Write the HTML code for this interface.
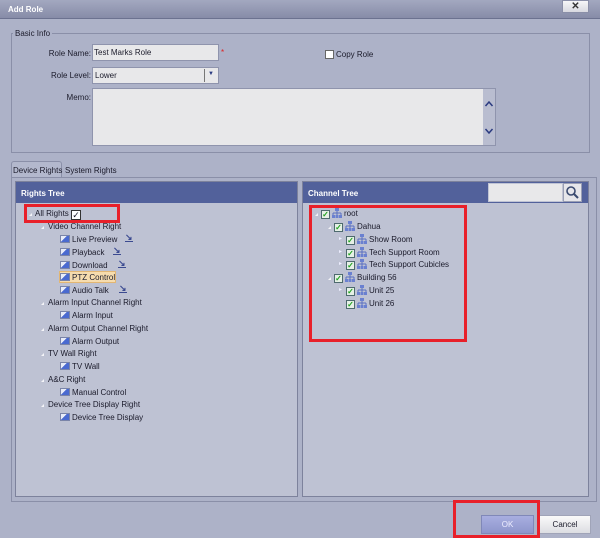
<!DOCTYPE html>
<html><head><style>
*{margin:0;padding:0;box-sizing:border-box}
body{width:600px;height:538px;background:#adb2c8;font-family:"Liberation Sans",sans-serif;font-size:8px;color:#1a1a2a;position:relative;overflow:hidden}
.a{position:absolute}
.title{left:0;top:0;width:600px;height:19px;background:linear-gradient(#a3a8c0,#878ca8);border-bottom:1px solid #6c7290}
.inp{background:#e8e8ea;border:1px solid #8f94ad}
.lbl{text-align:right;width:80px}
.hdr{background:#52619b;color:#fff;font-weight:bold;height:21px;padding:7px 0 0 5px;font-size:8px}
.panel{background:#bec2d3;border:1px solid #7d829c}
.t{position:absolute;white-space:nowrap}
.ic{display:inline-block;width:10px;height:8px;background:linear-gradient(135deg,#e8ecf8 40%,#4a6ad0 41%);border:1px solid #7a84a8;vertical-align:-1px;margin-right:2px}
.tri{position:absolute;width:0;height:0;border-left:3px solid transparent;border-bottom:3px solid #f4f4f8}
.cb{display:inline-block;width:9px;height:9px;background:#e6f0e6;border:1px solid #4e6a6e;vertical-align:-1px;color:#1fa21f;font-size:8px;line-height:7px;text-align:center;font-weight:bold;margin-right:2px}
.net{display:inline-block;width:10px;height:10px;vertical-align:-2px;margin-right:2px}
.red{border:3px solid #e8202a}
.dl{position:absolute;color:#3b4a90;font-size:9px;font-weight:bold;border-bottom:1px solid #3b4a90;line-height:8px}
</style></head><body>
<div class="a title"></div>
<div class="t" style="left:8px;top:5px;color:#fff;font-weight:bold;font-size:8px">Add Role</div>
<div class="a" style="left:562px;top:0;width:27px;height:13px;background:linear-gradient(#f6f6f8,#d8d9e0);border:1px solid #8a8fa8;text-align:center;font-weight:bold;font-size:10px;line-height:11px;color:#333">✕</div>

<div class="a" style="left:11px;top:33px;width:579px;height:120px;border:1px solid #8a8fa8"></div>
<div class="t" style="left:13px;top:29px;background:#adb2c8;padding:0 2px">Basic Info</div>
<div class="t lbl" style="left:11px;top:49px">Role Name:</div>
<div class="a inp" style="left:92px;top:44px;width:127px;height:17px;padding:3px 1px">Test Marks Role</div>
<div class="t" style="left:221px;top:48px;color:#e02020;font-size:8px">*</div>
<div class="t lbl" style="left:11px;top:71px">Role Level:</div>
<div class="a inp" style="left:92px;top:67px;width:127px;height:17px;padding:3px 2px">Lower</div>
<div class="a" style="left:204px;top:69px;width:1px;height:13px;background:#777"></div>
<div class="t" style="left:208px;top:71px;color:#2a3a80;font-size:6px">▼</div>
<div class="t lbl" style="left:11px;top:93px">Memo:</div>
<div class="a inp" style="left:92px;top:88px;width:404px;height:58px"></div>
<div class="a" style="left:483px;top:89px;width:12px;height:56px;background:#b9bdd0">
<svg width="12" height="56"><path d="M2.5 108 M2.5 17l3.5-4 3.5 4M2.5 40l3.5 4 3.5-4" stroke="#2a3a80" stroke-width="1.5" fill="none"/></svg></div>
<div class="a" style="left:325px;top:50px;width:9px;height:9px;background:#fff;border:1px solid #666"></div>
<div class="t" style="left:336px;top:50px">Copy Role</div>

<div class="a" style="left:11px;top:161px;width:51px;height:17px;border:1px solid #8a8fa8;border-bottom:none;border-radius:3px 3px 0 0;background:#b3b8cd"></div>
<div class="t" style="left:13px;top:166px">Device Rights</div>
<div class="t" style="left:65px;top:166px">System Rights</div>
<div class="a" style="left:11px;top:177px;width:586px;height:325px;border:1px solid #8a8fa8"></div>

<div class="a panel" style="left:15px;top:181px;width:283px;height:316px"><div class="hdr">Rights Tree</div></div>
<div class="a panel" style="left:302px;top:181px;width:287px;height:316px"><div class="hdr">Channel Tree</div></div>
<div class="a inp" style="left:488px;top:183px;width:75px;height:19px;border-color:#c0c4d4"></div>
<div class="a" style="left:563px;top:183px;width:19px;height:19px;background:#e6e6ea;border:1px solid #9a9fb4">
<svg width="17" height="17" viewBox="0 0 17 17"><circle cx="7" cy="7" r="4" fill="none" stroke="#3a4a70" stroke-width="1.6"/><line x1="10" y1="10" x2="14" y2="14" stroke="#3a4a70" stroke-width="2"/></svg></div>

<!-- left tree -->
<div class="tri" style="left:29px;top:213px"></div>
<div class="t" style="left:35px;top:209px">All Rights <span style="display:inline-block;width:10px;height:10px;background:#fff;border:1px solid #333;font-size:9px;line-height:8px;text-align:center;vertical-align:-2px">✓</span></div>
<div class="a red" style="left:24px;top:204px;width:96px;height:19px"></div>
<div class="tri" style="left:41px;top:226px"></div><div class="t" style="left:48px;top:222px">Video Channel Right</div>
<div class="t" style="left:60px;top:235px"><span class="ic"></span>Live Preview</div><div class="dl" style="left:125px;top:233px">↘</div>
<div class="t" style="left:60px;top:248px"><span class="ic"></span>Playback</div><div class="dl" style="left:113px;top:246px">↘</div>
<div class="t" style="left:60px;top:261px"><span class="ic"></span>Download</div><div class="dl" style="left:118px;top:259px">↘</div>
<div class="a" style="left:59px;top:271px;width:57px;height:12px;background:#f6dcae;border:1px solid #e2b674"></div>
<div class="t" style="left:60px;top:273px"><span class="ic"></span>PTZ Control</div>
<div class="t" style="left:60px;top:286px"><span class="ic"></span>Audio Talk</div><div class="dl" style="left:119px;top:284px">↘</div>
<div class="tri" style="left:41px;top:302px"></div><div class="t" style="left:48px;top:298px">Alarm Input Channel Right</div>
<div class="t" style="left:60px;top:311px"><span class="ic"></span>Alarm Input</div>
<div class="tri" style="left:41px;top:328px"></div><div class="t" style="left:48px;top:324px">Alarm Output Channel Right</div>
<div class="t" style="left:60px;top:337px"><span class="ic"></span>Alarm Output</div>
<div class="tri" style="left:41px;top:353px"></div><div class="t" style="left:48px;top:349px">TV Wall Right</div>
<div class="t" style="left:60px;top:362px"><span class="ic"></span>TV Wall</div>
<div class="tri" style="left:41px;top:379px"></div><div class="t" style="left:48px;top:375px">A&amp;C Right</div>
<div class="t" style="left:60px;top:388px"><span class="ic"></span>Manual Control</div>
<div class="tri" style="left:41px;top:404px"></div><div class="t" style="left:48px;top:400px">Device Tree Display Right</div>
<div class="t" style="left:60px;top:413px"><span class="ic"></span>Device Tree Display</div>

<!-- right tree -->
<svg width="0" height="0" style="position:absolute"><defs><g id="n"><rect x="3" y="0" width="4" height="3" fill="#6a80d0"/><path d="M5 3v2M1 5h8M1 5v2M5 5v2M9 5v2" stroke="#5a70c0" fill="none"/><rect x="0" y="7" width="3" height="3" fill="#6a80d0"/><rect x="3.5" y="7" width="3" height="3" fill="#6a80d0"/><rect x="7" y="7" width="3" height="3" fill="#6a80d0"/></g></defs></svg>
<div class="tri" style="left:315px;top:213px"></div>
<div class="t" style="left:321px;top:208px"><span class="cb">✓</span><svg class="net"><use href="#n"/></svg>root</div>
<div class="tri" style="left:328px;top:226px"></div>
<div class="t" style="left:334px;top:221px"><span class="cb">✓</span><svg class="net"><use href="#n"/></svg>Dahua</div>
<div class="t" style="left:339px;top:235px;font-size:6px;color:#eef">▸</div>
<div class="t" style="left:346px;top:234px"><span class="cb">✓</span><svg class="net"><use href="#n"/></svg>Show Room</div>
<div class="t" style="left:339px;top:248px;font-size:6px;color:#eef">▸</div>
<div class="t" style="left:346px;top:247px"><span class="cb">✓</span><svg class="net"><use href="#n"/></svg>Tech Support Room</div>
<div class="t" style="left:339px;top:260px;font-size:6px;color:#eef">▸</div>
<div class="t" style="left:346px;top:259px"><span class="cb">✓</span><svg class="net"><use href="#n"/></svg>Tech Support Cubicles</div>
<div class="tri" style="left:328px;top:277px"></div>
<div class="t" style="left:334px;top:272px"><span class="cb">✓</span><svg class="net"><use href="#n"/></svg>Building 56</div>
<div class="t" style="left:339px;top:286px;font-size:6px;color:#eef">▸</div>
<div class="t" style="left:346px;top:285px"><span class="cb">✓</span><svg class="net"><use href="#n"/></svg>Unit 25</div>
<div class="t" style="left:346px;top:298px"><span class="cb">✓</span><svg class="net"><use href="#n"/></svg>Unit 26</div>
<div class="a red" style="left:309px;top:205px;width:158px;height:137px"></div>

<!-- buttons -->
<div class="a" style="left:481px;top:515px;width:53px;height:19px;background:linear-gradient(#a8aee0,#8e96cc);border:1px solid #8088b8;color:#eef;text-align:center;line-height:17px">OK</div>
<div class="a" style="left:539px;top:515px;width:52px;height:19px;background:linear-gradient(#fafafa,#dcdde2);border:1px solid #a0a4b8;text-align:center;line-height:17px">Cancel</div>
<div class="a red" style="left:453px;top:500px;width:87px;height:38px"></div>
</body></html>
